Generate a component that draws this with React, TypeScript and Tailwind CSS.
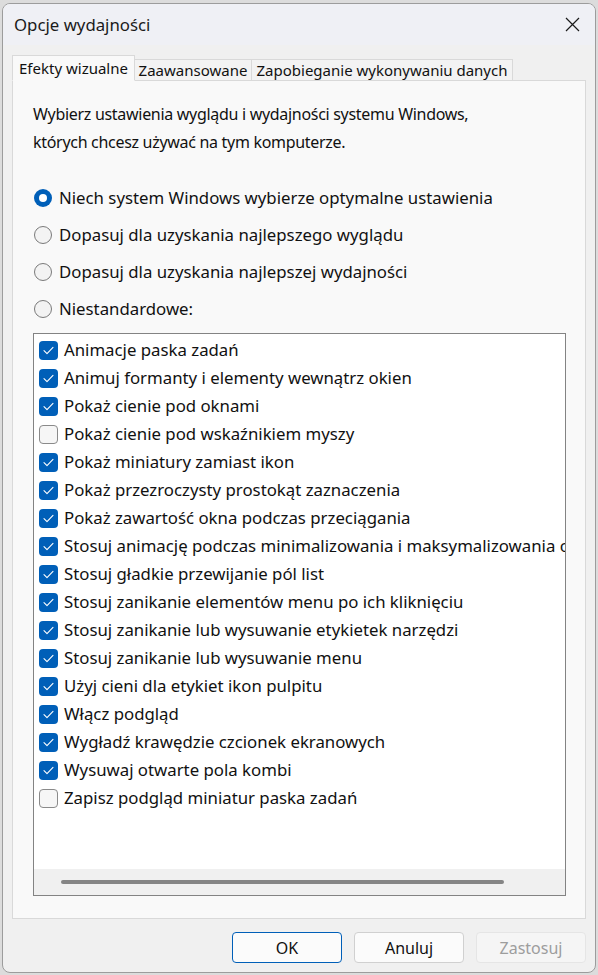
import React, { useState } from 'react';

const font = { fontFamily: '"Noto Sans", "DejaVu Sans", sans-serif' };

const effects: { label: string; checked: boolean }[] = [
    { label: 'Animacje paska zadań', checked: true },
    { label: 'Animuj formanty i elementy wewnątrz okien', checked: true },
    { label: 'Pokaż cienie pod oknami', checked: true },
    { label: 'Pokaż cienie pod wskaźnikiem myszy', checked: false },
    { label: 'Pokaż miniatury zamiast ikon', checked: true },
    { label: 'Pokaż przezroczysty prostokąt zaznaczenia', checked: true },
    { label: 'Pokaż zawartość okna podczas przeciągania', checked: true },
    { label: 'Stosuj animację podczas minimalizowania i maksymalizowania okien', checked: true },
    { label: 'Stosuj gładkie przewijanie pól list', checked: true },
    { label: 'Stosuj zanikanie elementów menu po ich kliknięciu', checked: true },
    { label: 'Stosuj zanikanie lub wysuwanie etykietek narzędzi', checked: true },
    { label: 'Stosuj zanikanie lub wysuwanie menu', checked: true },
    { label: 'Użyj cieni dla etykiet ikon pulpitu', checked: true },
    { label: 'Włącz podgląd', checked: true },
    { label: 'Wygładź krawędzie czcionek ekranowych', checked: true },
    { label: 'Wysuwaj otwarte pola kombi', checked: true },
    { label: 'Zapisz podgląd miniatur paska zadań', checked: false },
];

const modes = [
    'Niech system Windows wybierze optymalne ustawienia',
    'Dopasuj dla uzyskania najlepszego wyglądu',
    'Dopasuj dla uzyskania najlepszej wydajności',
    'Niestandardowe:',
];

function CheckBox({ checked }: { checked: boolean }) {
    if (!checked) {
        return <span className="block w-[19px] h-[19px] shrink-0 rounded-[4px] border border-[#8a8a8a] bg-[#f6f6f6]" />;
    }
    return (
        <span className="w-[19px] h-[19px] shrink-0 rounded-[4px] bg-[#005fb8] flex items-center justify-center">
            <svg width="11" height="9" viewBox="0 0 11 9" fill="none">
                <path d="M1 4.6 L4 7.6 L10 1.4" stroke="white" strokeWidth="1.1" strokeLinecap="round" strokeLinejoin="round" />
            </svg>
        </span>
    );
}

function Radio({ selected }: { selected: boolean }) {
    if (selected) {
        return (
            <span className="w-[18px] h-[18px] shrink-0 rounded-full bg-[#005fb8] flex items-center justify-center">
                <span className="block w-[8px] h-[8px] rounded-full bg-white" />
            </span>
        );
    }
    return <span className="block w-[18px] h-[18px] shrink-0 rounded-full border border-[#7a7a7a] bg-[#f3f3f3]" />;
}

export default function App() {
    const [mode, setMode] = useState(0);
    const [tab, setTab] = useState(0);
    const [items, setItems] = useState(effects);

    const tabs = ['Efekty wizualne', 'Zaawansowane', 'Zapobieganie wykonywaniu danych'];

    return (
        <div className="w-[598px] h-[975px] bg-[#dcdcdc] pl-[2px] pt-[3px] overflow-hidden" style={font}>
            <div className="w-[594px] h-[970px] rounded-[8px] border border-[#9c9c9c] bg-[#f0f0f0] flex flex-col overflow-hidden">
                {/* Title bar */}
                <div className="h-[41px] shrink-0 bg-[#eff0f5] flex items-center justify-between pl-[11px] pr-[15px]">
                    <span className="text-[16.8px] text-[#1a1a1a]">Opcje wydajności</span>
                    <svg width="15" height="15" viewBox="0 0 15 15">
                        <path d="M1 1 L14 14 M14 1 L1 14" stroke="#1a1a1a" strokeWidth="1.2" />
                    </svg>
                </div>

                <div className="flex-1 flex flex-col px-[9px]">
                    {/* Tabs */}
                    <div className="flex items-end mt-[10px] h-[26px] relative z-10 -mb-px">
                        {tabs.map((t, i) => (
                            <button
                                key={t}
                                onClick={() => setTab(i)}
                                className={`text-[15px] leading-none text-[#111] border border-[#d9d9d9] ${i === 0 ? 'w-[123px]' : i === 1 ? 'w-[117px]' : 'w-[261px]'} ${tab === i
                                    ? 'h-[26px] bg-[#f9f9f9] border-b-[#f9f9f9] pt-[1px]'
                                    : 'h-[22px] bg-[#f3f3f3] border-l-0 pt-[1px]'
                                    }`}
                            >
                                {t}
                            </button>
                        ))}
                    </div>

                    {/* Panel */}
                    <div className="w-[574px] h-[839px] border border-[#d9d9d9] bg-[#f9f9f9] flex flex-col pl-[20px] pr-[19px] pt-[19px]">
                        <p className="text-[16px] leading-[28px] text-[#111] tracking-[-0.3px]">
                            Wybierz ustawienia wyglądu i wydajności systemu Windows,<br />
                            których chcesz używać na tym komputerze.
                        </p>

                        <div className="mt-[23px] flex flex-col">
                            {modes.map((m, i) => (
                                <label key={m} onClick={() => setMode(i)} className="h-[37px] flex items-center gap-[7px] text-[16.8px] text-[#111] cursor-default">
                                    <span className="block ml-[1px]"><Radio selected={mode === i} /></span>
                                    {m}
                                </label>
                            ))}
                        </div>

                        {/* Effects list */}
                        <div className="mt-[6px] h-[563px] border border-[#838383] bg-white flex flex-col overflow-hidden">
                            <div className="flex-1 pt-[2px] pl-[5px] overflow-hidden">
                                {items.map((it, i) => (
                                    <div
                                        key={it.label}
                                        onClick={() => setItems(items.map((x, j) => (j === i ? { ...x, checked: !x.checked } : x)))}
                                        className="h-[28px] flex items-center gap-[6px] whitespace-nowrap text-[16.8px] text-[#111]"
                                    >
                                        <CheckBox checked={it.checked} />
                                        {it.label}
                                    </div>
                                ))}
                            </div>
                            <div className="h-[26px] shrink-0 bg-[#f0f0f0] flex items-center pl-[27px]">
                                <div className="w-[443px] h-[4px] rounded-full bg-[#858585]" />
                            </div>
                        </div>
                    </div>

                    {/* Buttons */}
                    <div className="flex justify-end gap-[12px] mt-[13px]">
                        <button className="w-[110px] h-[31px] rounded-[4px] border border-[#005fb8] bg-[#fbfbfb] text-[16px] text-[#111]">OK</button>
                        <button className="w-[110px] h-[31px] rounded-[4px] border border-[#d0d0d0] bg-[#fbfbfb] text-[16px] text-[#111]">Anuluj</button>
                        <button className="w-[110px] h-[31px] rounded-[4px] border border-[#e5e5e5] bg-[#f5f5f5] text-[16px] text-[#9d9d9d]">Zastosuj</button>
                    </div>
                </div>
            </div>
        </div>
    );
}
